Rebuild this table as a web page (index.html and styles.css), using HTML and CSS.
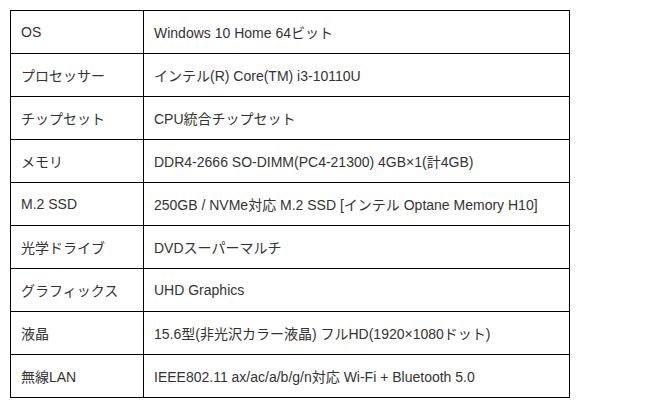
FILE: index.html
```html
<!DOCTYPE html>
<html lang="ja">
<head>
<meta charset="utf-8">
<link rel="stylesheet" href="styles.css">
</head>
<body>
<table class="spec">
<tbody>
<tr><th>OS</th><td>Windows 10 Home 64ビット</td></tr>
<tr><th>プロセッサー</th><td>インテル(R) Core(TM) i3-10110U</td></tr>
<tr><th>チップセット</th><td>CPU統合チップセット</td></tr>
<tr><th>メモリ</th><td>DDR4-2666 SO-DIMM(PC4-21300) 4GB×1(計4GB)</td></tr>
<tr><th>M.2 SSD</th><td>250GB / NVMe対応 M.2 SSD [インテル Optane Memory H10]</td></tr>
<tr><th>光学ドライブ</th><td>DVDスーパーマルチ</td></tr>
<tr><th>グラフィックス</th><td>UHD Graphics</td></tr>
<tr><th>液晶</th><td>15.6型(非光沢カラー液晶) フルHD(1920×1080ドット)</td></tr>
<tr><th>無線LAN</th><td>IEEE802.11 ax/ac/a/b/g/n対応 Wi-Fi + Bluetooth 5.0</td></tr>
</tbody>
</table>
</body>
</html>
```
FILE: styles.css
```css
body {
  margin: 10px;
  background: #fff;
  font-family: "Liberation Sans", Arial, "Noto Sans CJK JP", sans-serif;
  font-size: 14px;
  color: #333;
}
.spec {
  border-collapse: collapse;
  width: 560px;
}
.spec th, .spec td {
  border: 1px solid #000;
  height: 43px;
  padding: 0 10px;
  text-align: left;
  font-weight: normal;
  vertical-align: middle;
  box-sizing: border-box;
}
.spec th {
  width: 133px;
}
```
